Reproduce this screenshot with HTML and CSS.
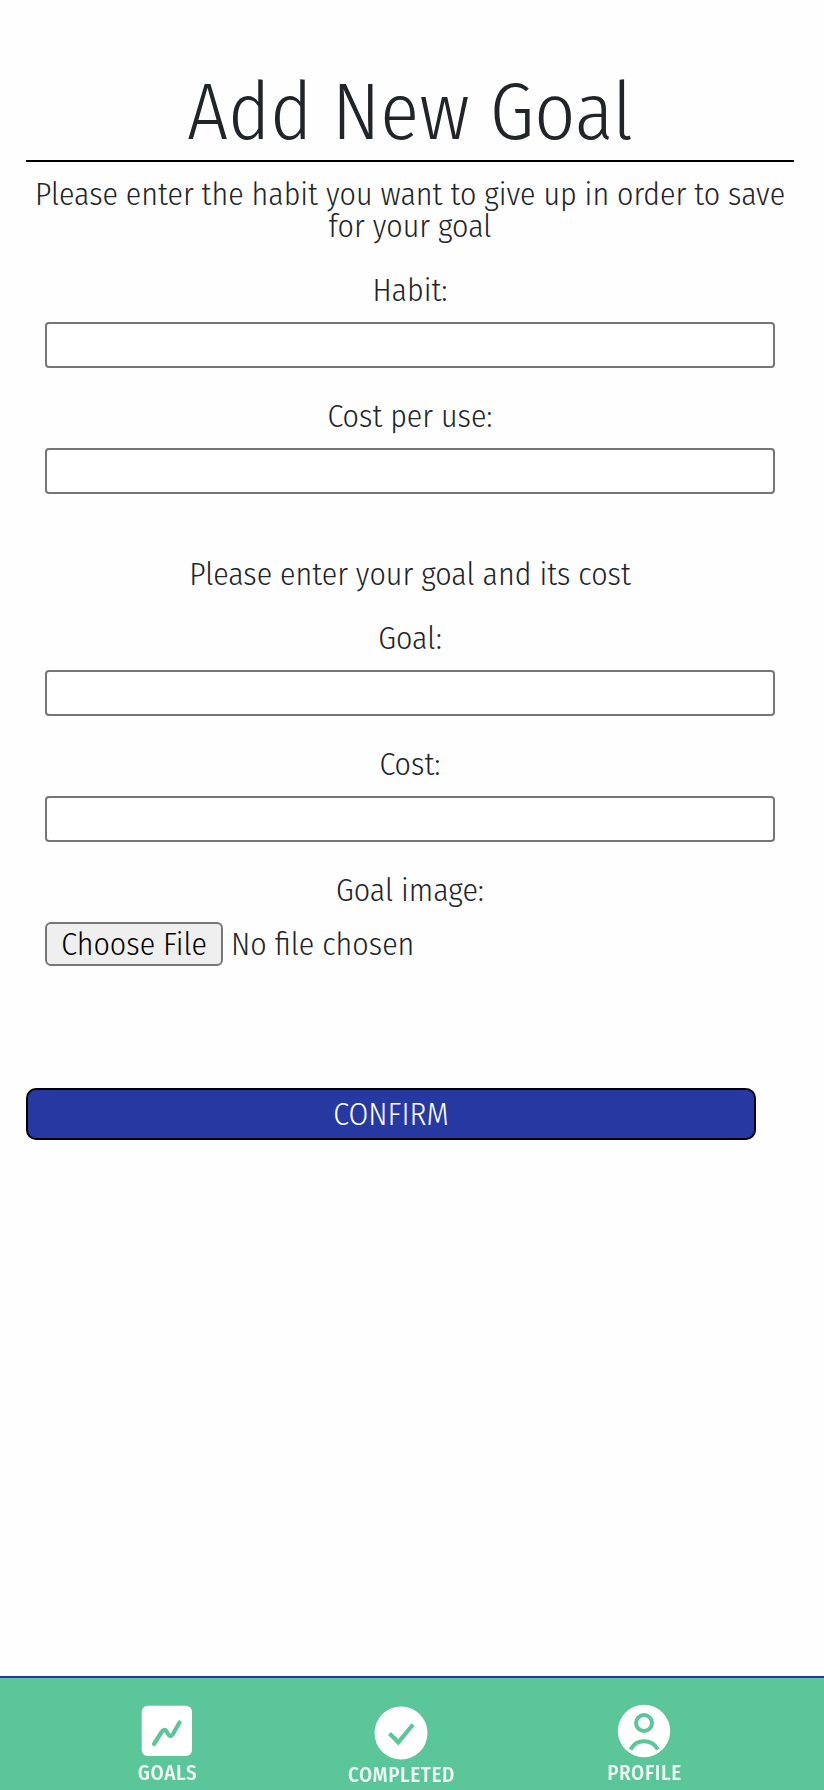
FILE: index.html
```
<!DOCTYPE html>
<html lang="en">
<head>
<meta charset="utf-8">
<title>Add New Goal</title>
<link rel="stylesheet" href="styles.css">
</head>
<body>
<main class="page">
  <h1 class="title">Add New Goal</h1>
  <form class="form">
    <p class="hint">Please enter the habit you want to give up in order to save for your goal</p>
    <label class="field">Habit:<input class="input" type="text"></label>
    <label class="field">Cost per use:<input class="input" type="text"></label>
    <p class="hint hint-goal">Please enter your goal and its cost</p>
    <label class="field">Goal:<input class="input" type="text"></label>
    <label class="field">Cost:<input class="input" type="text"></label>
    <div class="field">Goal image:
      <div class="file"><button class="file-button" type="button">Choose File</button><span>No file chosen</span></div>
    </div>
    <button class="confirm" type="button">CONFIRM</button>
  </form>
</main>
<nav class="nav">
  <a class="nav-item goals">
    <svg class="icon" width="54" height="54" viewBox="0 0 54 54">
      <rect x="1.7" y="1.7" width="50.3" height="50.3" rx="6" fill="#fff"/>
      <path d="M14 40 L21.3 28.5 Q24.5 23.5 27 28 Q30 35 33 30 L39.5 18.5" fill="none" stroke="#5cc69b" stroke-width="4.2" stroke-linecap="round"/>
    </svg>
    <span>GOALS</span>
  </a>
  <a class="nav-item completed">
    <svg class="icon" width="54" height="54" viewBox="0 0 54 54">
      <circle cx="27" cy="27" r="26.5" fill="#fff"/>
      <path d="M15.5 27.5 L24.3 36.3 L39 18.5" fill="none" stroke="#5cc69b" stroke-width="4.2"/>
    </svg>
    <span>COMPLETED</span>
  </a>
  <a class="nav-item profile">
    <svg class="icon" width="54" height="54" viewBox="0 0 54 54">
      <circle cx="27" cy="27" r="26.2" fill="#fff"/>
      <circle cx="27" cy="19" r="8" fill="none" stroke="#5cc69b" stroke-width="4"/>
      <path d="M13.5 45.5 C19.5 34.5 34.5 34.5 41 45.5" fill="none" stroke="#5cc69b" stroke-width="4"/>
    </svg>
    <span>PROFILE</span>
  </a>
</nav>
</body>
</html>
```
FILE: styles.css
```
* { box-sizing: border-box; }

body {
  margin: 0;
  min-height: 1790px;
  display: flex;
  flex-direction: column;
  justify-content: space-between;
  background: #fefefe;
  color: #212529;
  font: 300 31.85px/32px "Fira Sans Condensed", "Open Sans", sans-serif;
}

.page { padding: 64px 30px 0 26px; }

.title {
  margin: 0;
  border-bottom: 2px solid #000;
  font-size: 79.8px;
  font-weight: 300;
  line-height: 96px;
  text-align: center;
}

.form {
  display: flex;
  flex-direction: column;
  gap: 32px;
  padding-top: 16px;
  text-align: center;
}

.hint { margin: 0; }
.hint-goal { margin-top: 32px; }

.field {
  display: flex;
  flex-direction: column;
  gap: 16px;
  padding: 0 19px;
}

.input {
  width: 100%;
  height: 46px;
  border: 2px solid #767676;
  border-radius: 4px;
  background: #fff;
  font: inherit;
}

.file {
  display: flex;
  align-items: center;
  gap: 8px;
  height: 44px;
}

.file-button {
  width: 178px;
  height: 44px;
  padding: 0;
  border: 2px solid #767676;
  border-radius: 6px;
  background: #efefef;
  color: #000;
  font: inherit;
}

.confirm {
  width: 730px;
  height: 52px;
  margin-top: 90px;
  padding: 0;
  border: 2px solid #000;
  border-radius: 10px;
  background: #2639a2;
  color: #fff;
  font: inherit;
}

.nav {
  display: grid;
  grid-template-columns: 334px 134px 1fr;
  height: 114px;
  border-top: 2px solid #2639a2;
  background: #5cc69b;
  color: #f0faf5;
  font-size: 21px;
  font-weight: 500;
  line-height: 28px;
  letter-spacing: 0.6px;
}

.nav-item {
  display: flex;
  flex-direction: column;
  align-items: center;
  filter: blur(0.6px);
}

.nav-item span { padding: 1px 0 0 1px; }

.goals { padding-top: 26px; }
.completed { padding-top: 28px; }
.profile { padding-top: 26px; padding-right: 4px; }

.icon { display: block; flex: none; }
```
